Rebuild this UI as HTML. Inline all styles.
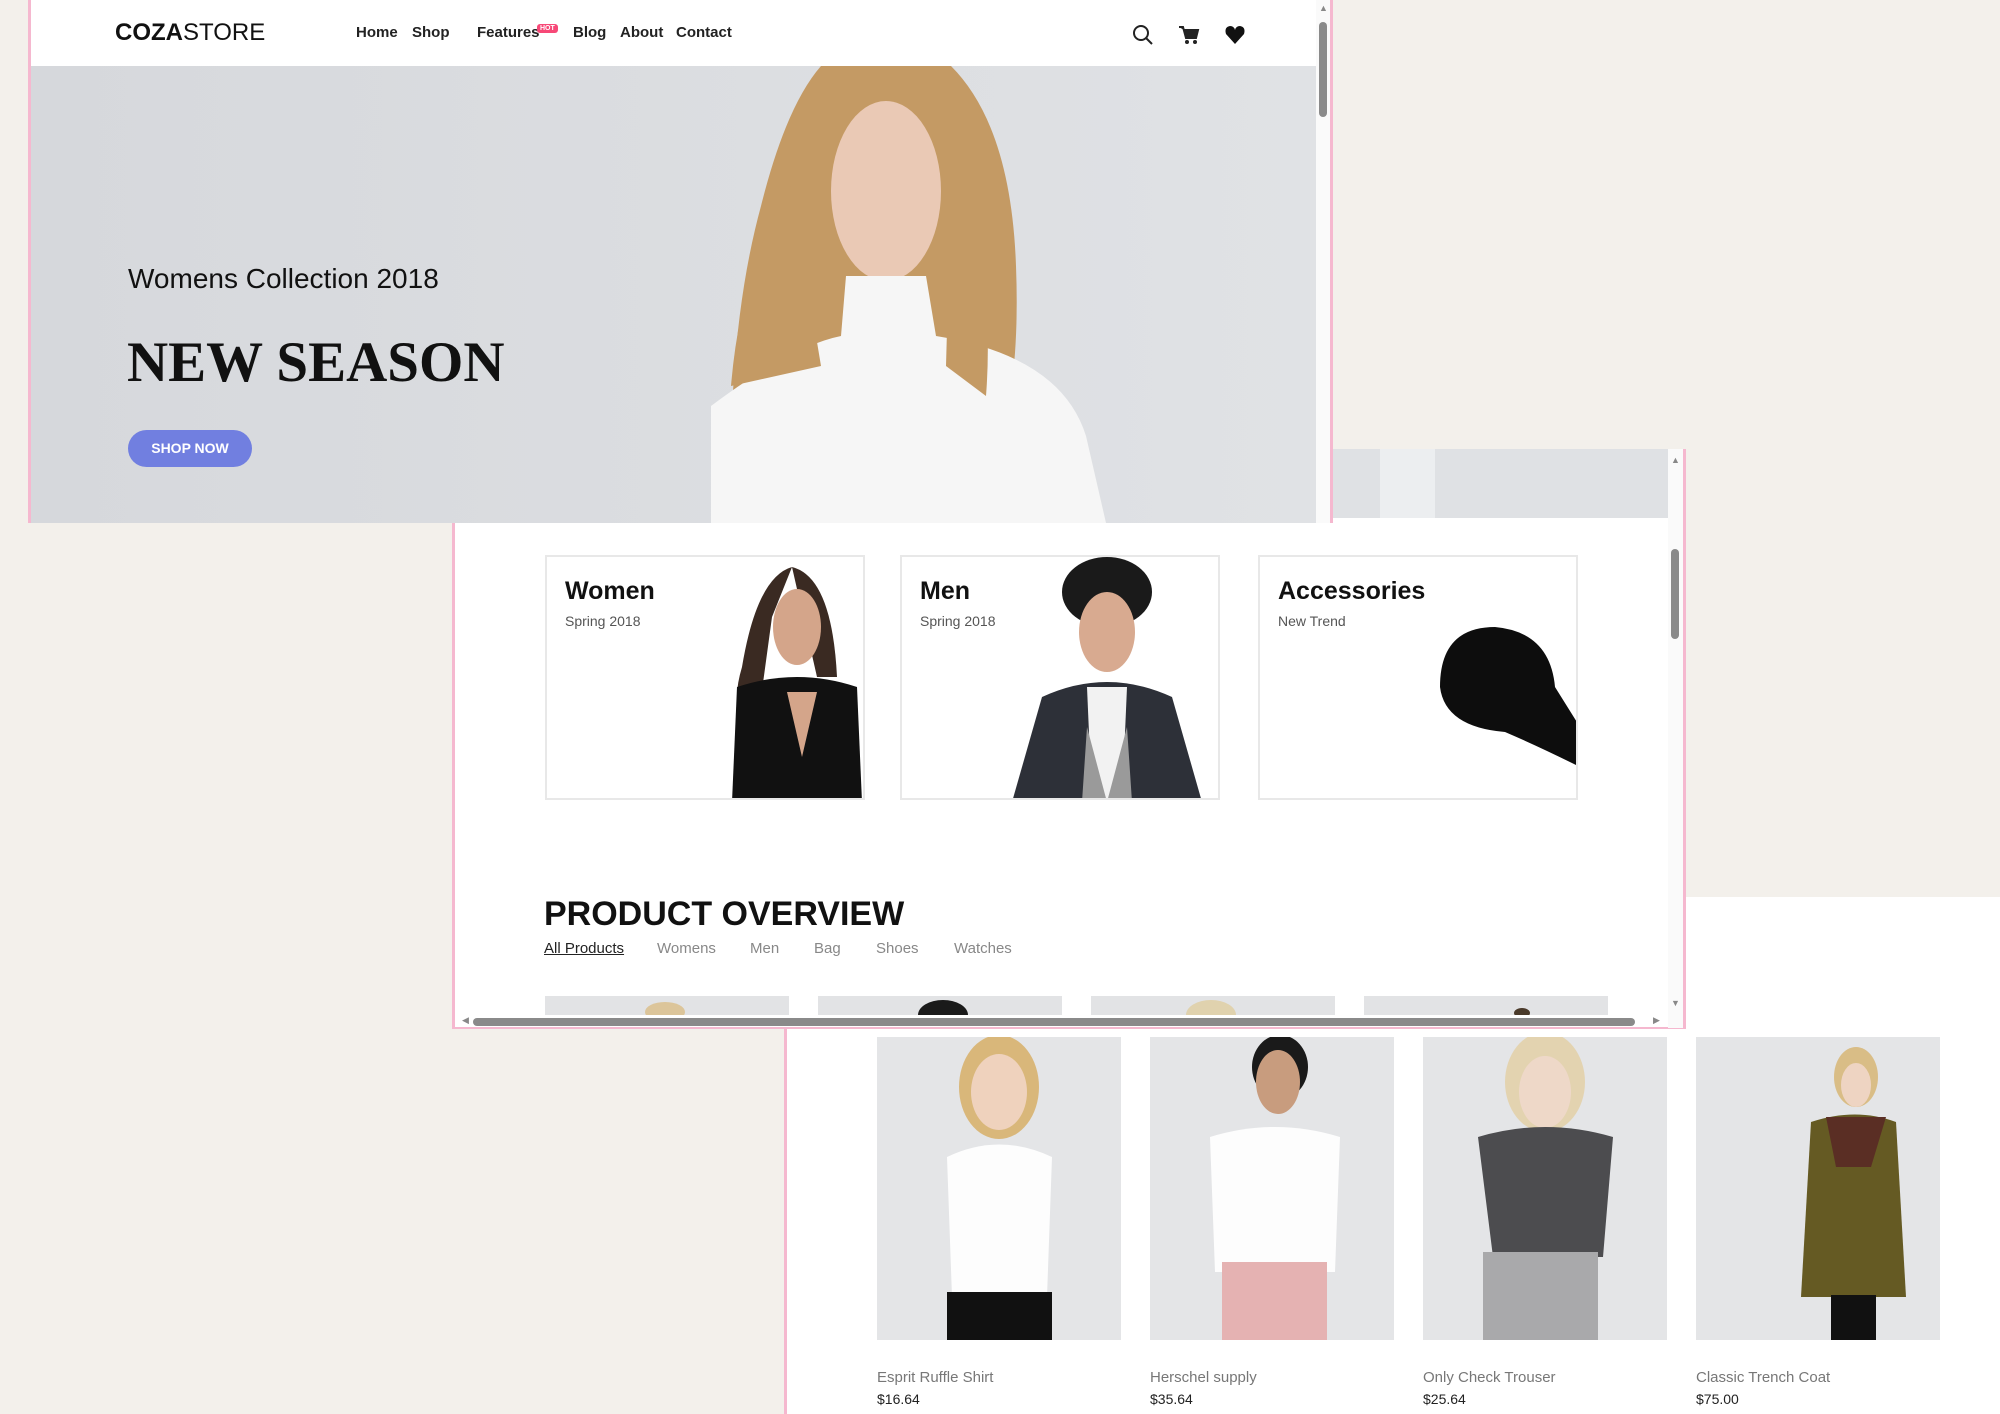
<!DOCTYPE html>
<html><head><meta charset="utf-8"><style>
*{margin:0;padding:0;box-sizing:border-box}
body{width:2000px;height:1414px;background:#f3f0eb;position:relative;overflow:hidden;font-family:"Liberation Sans",sans-serif}
.abs{position:absolute}
.nav a{position:absolute;top:24px;font-size:15px;font-weight:bold;color:#222;text-decoration:none}
.card{position:absolute;top:555px;width:320px;height:245px;border:2px solid #e8e8e8;background:#fff;overflow:hidden}
.card h3{position:absolute;left:18px;top:20px;font-size:25px;font-weight:bold;color:#111}
.card p{position:absolute;left:18px;top:56px;font-size:14px;color:#555}
.flt{position:absolute;top:940px;font-size:15px;color:#888}
.pt{position:absolute;top:996px;width:244px;height:19px;background:#e2e3e5;overflow:hidden}
.prod{position:absolute;top:1037px;width:244px;height:303px;background:#e4e5e7;overflow:hidden}
.pn{position:absolute;top:1369px;font-size:15px;color:#777}
.pp{position:absolute;top:1391px;font-size:14px;color:#222}
</style></head><body>

<div class="abs" style="left:784px;top:897px;width:1216px;height:517px;background:#fff"></div>
<div class="abs" style="left:784px;top:1028px;width:3px;height:386px;background:#f5b8cf"></div>

<div class="prod" style="left:877px">
<svg width="244" height="303"><ellipse cx="122" cy="50" rx="40" ry="52" fill="#d9b77a"/><ellipse cx="122" cy="55" rx="28" ry="38" fill="#efd2bd"/><path d="M70 120 Q122 95 175 120 L170 260 L75 260Z" fill="#fdfdfd"/><rect x="70" y="255" width="105" height="48" fill="#111"/></svg></div>
<div class="prod" style="left:1150px">
<svg width="244" height="303"><ellipse cx="130" cy="30" rx="28" ry="32" fill="#1a1a1a"/><ellipse cx="128" cy="45" rx="22" ry="32" fill="#c89c7e"/><path d="M60 100 Q125 80 190 100 L185 235 L65 235Z" fill="#fdfdfd"/><rect x="72" y="225" width="105" height="78" fill="#e5b2b2"/></svg></div>
<div class="prod" style="left:1423px">
<svg width="244" height="303"><ellipse cx="122" cy="45" rx="40" ry="50" fill="#e3d3b0"/><ellipse cx="122" cy="55" rx="26" ry="36" fill="#eed8c8"/><path d="M55 100 Q122 80 190 100 L180 220 L70 220Z" fill="#4c4c4f"/><rect x="60" y="215" width="115" height="88" fill="#a9a9ab"/></svg></div>
<div class="prod" style="left:1696px">
<svg width="244" height="303"><ellipse cx="160" cy="40" rx="22" ry="30" fill="#d9bd86"/><ellipse cx="160" cy="48" rx="15" ry="22" fill="#eed4c2"/><path d="M115 85 Q160 70 200 85 L210 260 L105 260Z" fill="#655a23"/><path d="M130 80 L190 80 L175 130 L140 130Z" fill="#5a2e24"/><rect x="135" y="258" width="45" height="45" fill="#111"/></svg></div>

<div class="pn" style="left:877px">Esprit Ruffle Shirt</div><div class="pp" style="left:877px">$16.64</div>
<div class="pn" style="left:1150px">Herschel supply</div><div class="pp" style="left:1150px">$35.64</div>
<div class="pn" style="left:1423px">Only Check Trouser</div><div class="pp" style="left:1423px">$25.64</div>
<div class="pn" style="left:1696px">Classic Trench Coat</div><div class="pp" style="left:1696px">$75.00</div>

<div class="abs" style="left:452px;top:449px;width:1234px;height:580px;background:#fff;border-left:3px solid #f5b8cf;border-right:3px solid #f5b8cf;border-bottom:2px solid #f5b8cf"></div>
<div class="abs" style="left:1333px;top:449px;width:335px;height:69px;background:#dfe1e4"></div>
<div class="abs" style="left:1380px;top:449px;width:55px;height:69px;background:#eceef0"></div>
<div class="abs" style="left:1668px;top:449px;width:15px;height:579px;background:#fafafa"></div>
<div class="abs" style="left:1671px;top:549px;width:8px;height:90px;background:#8a8a8a;border-radius:4px"></div>
<div class="abs" style="left:1671px;top:455px;font-size:9px;color:#888">▲</div>
<div class="abs" style="left:1671px;top:998px;font-size:9px;color:#888">▼</div>
<div class="abs" style="left:462px;top:1015px;font-size:9px;color:#888">◀</div>
<div class="abs" style="left:1653px;top:1015px;font-size:9px;color:#888">▶</div>
<div class="abs" style="left:473px;top:1018px;width:1162px;height:8px;background:#8a8a8a;border-radius:4px"></div>

<div class="card" style="left:545px"><h3>Women</h3><p>Spring 2018</p>
<svg class="abs" style="left:150px;top:0" width="170" height="245"><path d="M95 10 Q60 20 45 110 Q30 160 60 170 L75 60Z" fill="#3a2a22"/><path d="M95 10 Q135 20 140 120 L120 120Z" fill="#3a2a22"/><ellipse cx="100" cy="70" rx="24" ry="38" fill="#d4a58a"/><path d="M40 130 Q100 110 160 130 L165 245 L35 245Z" fill="#111"/><path d="M90 135 L105 200 L120 135Z" fill="#d4a58a"/></svg></div>
<div class="card" style="left:900px"><h3>Men</h3><p>Spring 2018</p>
<svg class="abs" style="left:70px;top:0" width="250" height="245"><ellipse cx="135" cy="35" rx="45" ry="35" fill="#1a1a1a"/><ellipse cx="135" cy="75" rx="28" ry="40" fill="#d8aa90"/><path d="M40 245 L70 140 Q135 110 200 140 L230 245Z" fill="#2d3038"/><path d="M115 130 L155 130 L150 245 L120 245Z" fill="#f2f2f2"/><path d="M115 170 L135 245 L155 170 L160 245 L110 245Z" fill="#9a9a9a"/></svg></div>
<div class="card" style="left:1258px"><h3>Accessories</h3><p>New Trend</p>
<svg class="abs" style="left:160px;top:60px" width="160" height="160"><path d="M20 70 Q20 10 75 10 Q130 15 135 70 L160 110 L160 150 Q120 130 85 115 Q25 110 20 70Z" fill="#0d0d0d"/></svg></div>

<div class="abs" style="left:544px;top:895px;font-size:34px;font-weight:bold;color:#111">PRODUCT OVERVIEW</div>
<div class="flt" style="left:544px;color:#222;text-decoration:underline">All Products</div>
<div class="flt" style="left:657px">Womens</div>
<div class="flt" style="left:750px">Men</div>
<div class="flt" style="left:814px">Bag</div>
<div class="flt" style="left:876px">Shoes</div>
<div class="flt" style="left:954px">Watches</div>
<div class="pt" style="left:545px"><div class="abs" style="left:100px;top:6px;width:40px;height:20px;border-radius:50%;background:#dcc59a"></div></div>
<div class="pt" style="left:818px"><div class="abs" style="left:100px;top:4px;width:50px;height:30px;border-radius:50%;background:#1a1a1a"></div></div>
<div class="pt" style="left:1091px"><div class="abs" style="left:95px;top:4px;width:50px;height:30px;border-radius:50%;background:#e0d2ae"></div></div>
<div class="pt" style="left:1364px"><div class="abs" style="left:150px;top:12px;width:16px;height:10px;border-radius:50%;background:#4a3a2a"></div></div>

<div class="abs" style="left:28px;top:0;width:1305px;height:523px;background:#fff;border-left:3px solid #f5b8cf;border-right:3px solid #f5b8cf"></div>
<div class="abs" style="left:1316px;top:0;width:14px;height:523px;background:#fafafa"></div>
<div class="abs" style="left:1319px;top:22px;width:8px;height:95px;background:#8a8a8a;border-radius:4px"></div>
<div class="abs" style="left:1319px;top:3px;font-size:9px;color:#888">▲</div>
<div class="abs" style="left:31px;top:66px;width:1285px;height:457px;background:#d8dade;overflow:hidden">
<svg width="1285" height="457">
<defs><linearGradient id="g" x1="0" x2="1"><stop offset="0" stop-color="#d6d8dc"/><stop offset="1" stop-color="#e0e2e5"/></linearGradient></defs>
<rect width="1285" height="457" fill="url(#g)"/>
<path d="M790 0 L920 0 Q980 60 985 200 Q990 330 960 400 L700 400 Q700 250 730 140 Q755 40 790 0Z" fill="#c49a64"/>
<ellipse cx="855" cy="125" rx="55" ry="90" fill="#eac9b5"/>
<path d="M680 340 Q760 280 810 270 L815 210 L895 210 L905 270 Q1030 290 1055 370 L1075 457 L680 457Z" fill="#f6f6f6"/>
<path d="M700 320 Q710 200 760 120 L790 300Z" fill="#c49a64"/>
<path d="M920 120 Q965 200 955 330 L915 300Z" fill="#c49a64"/>
</svg></div>
<div class="abs" style="left:115px;top:19px;font-size:24px;color:#111"><b>COZA</b>STORE</div>
<div class="nav">
<a style="left:356px">Home</a><a style="left:412px">Shop</a><a style="left:477px">Features</a><a style="left:573px">Blog</a><a style="left:620px">About</a><a style="left:676px">Contact</a>
</div>
<div class="abs" style="left:537px;top:24px;background:#f74877;color:#fff;font-size:7px;font-weight:bold;padding:1px 3px;border-radius:3px">HOT</div>
<svg class="abs" style="left:1132px;top:24px" width="22" height="22"><circle cx="9" cy="9" r="7" fill="none" stroke="#222" stroke-width="2"/><line x1="14" y1="14" x2="20" y2="20" stroke="#222" stroke-width="2"/></svg>
<svg class="abs" style="left:1178px;top:24px" width="22" height="22"><path d="M1 3 L5 3 L8 14 L18 14 L20 6 L6 6" fill="#222" stroke="#222" stroke-width="2"/><circle cx="9" cy="18" r="2" fill="#222"/><circle cx="17" cy="18" r="2" fill="#222"/></svg>
<svg class="abs" style="left:1224px;top:24px" width="22" height="22"><path d="M11 20 L2 10 Q0 3 6 2 Q10 2 11 6 Q12 2 16 2 Q22 3 20 10Z" fill="#111"/></svg>
<div class="abs" style="left:128px;top:263px;font-size:28px;color:#111">Womens Collection 2018</div>
<div class="abs" style="left:127px;top:330px;font-family:'Liberation Serif',serif;font-size:57px;font-weight:bold;color:#111">NEW SEASON</div>
<div class="abs" style="left:128px;top:430px;width:124px;height:37px;border-radius:19px;background:#717fe0;color:#fff;font-size:14px;font-weight:bold;text-align:center;line-height:37px">SHOP NOW</div>
</body></html>
